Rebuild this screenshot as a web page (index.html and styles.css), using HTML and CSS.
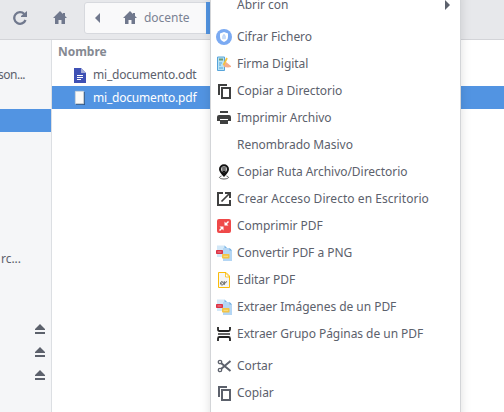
FILE: index.html
```html
<!DOCTYPE html>
<html lang="es">
<head>
<meta charset="utf-8">
<title>docente</title>
<link rel="stylesheet" href="styles.css">
</head>
<body>
<svg width="0" height="0" class="defs">
  <symbol id="home" viewBox="0 0 14 13"><path d="M7 0 0 7h2v6h3.500V9h3v4H12V7h2L12 5V2h-2v1z" fill="currentColor"/></symbol>
  <symbol id="eject" viewBox="0 0 10 10"><path d="M5 0 0 5v1h10V5zM0 8h10v2H0z" fill="currentColor"/></symbol>
  <symbol id="copy" viewBox="0 0 16 16"><path d="M3 12V2h8M6 5h8v10H6z" fill="none" stroke="currentColor" stroke-width="2"/></symbol>
  <symbol id="images" viewBox="0 0 16 16">
    <path d="M1 .5h7.500L11 3v9H1z" fill="#d3e8f8"/><path d="M8.500 .5V3H11z" fill="#7db6e6"/>
    <path d="M7 3h6.500L16 5.500V16H7z" fill="#b4d6f4"/><path d="M13.500 3v2.500H16z" fill="#69a9df"/>
    <rect y="5" width="7" height="4" rx=".7" fill="#dc3345"/><path d="M1.500 7h4" stroke="#f08a94"/>
    <rect x="6" y="9" width="7.500" height="4.500" rx=".7" fill="#f3c445"/><path d="M7.500 11.300h4.500" stroke="#fbe08a"/>
  </symbol>
</svg>
<div class="window">
  <header class="toolbar">
    <svg class="reload" viewBox="0 0 14 14"><path d="M11.300 3A5.800 5.800 0 1 0 12.500 9" fill="none" stroke="currentColor" stroke-width="2.300"/><path d="M14 0v6H8V5z" fill="currentColor"/></svg>
    <svg class="home"><use href="#home"/></svg>
    <nav class="path">
      <svg class="back" viewBox="0 0 5 10"><path d="M5 0v10L0 5z" fill="currentColor"/></svg>
      <svg class="home"><use href="#home"/></svg>
      <span>docente</span>
      <i class="current"></i>
    </nav>
  </header>
  <div class="content">
    <aside class="sidebar">
      <div class="place"></div>
      <div class="place first">son...</div>
      <div class="place"></div>
      <div class="place selected"></div>
      <div class="place"></div><div class="place"></div><div class="place"></div><div class="place"></div><div class="place"></div>
      <div class="place second">rc...</div>
      <div class="place"></div><div class="place"></div>
      <div class="place drive"><svg><use href="#eject"/></svg></div>
      <div class="place drive"><svg><use href="#eject"/></svg></div>
      <div class="place drive"><svg><use href="#eject"/></svg></div>
    </aside>
    <main class="files">
      <div class="heading">Nombre</div>
      <div class="file"><svg viewBox="0 0 16 16"><path d="M2 1h7l5 5v10H2z" fill="#3f51b5"/><path d="M9 1v5h5z" fill="#a4add9"/><path d="M5 8.500h6M5 10.500h6M5 12.500h4" stroke="#fff"/></svg>mi_documento.odt</div>
      <div class="file selected"><svg viewBox="0 0 16 16"><path d="M4 2h9v13H4z" fill="#234b7b" opacity=".8"/><path d="M3.300 1.300h8.400v12.400H3.300z" fill="#fafaf8" stroke="#d4d4ce" stroke-width=".6"/></svg>mi_documento.pdf</div>
    </main>
  </div>
</div>
<div class="menu">
  <div class="item"><svg></svg><span>Abrir con</span><svg class="submenu" viewBox="0 0 5 10"><path d="M0 0v10l5-5z" fill="currentColor"/></svg></div>
  <div class="separator"></div>
  <div class="item"><svg viewBox="0 0 16 16"><circle cx="8" cy="8" r="8" fill="#7baaf2"/><path d="M8 3 12 4.500v3.300Q12 11.500 8 13 4 11.500 4 7.800V4.500z" fill="#fff"/><path d="M6.500 7.300h3v2.500h-3zM7 7V6q1-1.500 2 0v1" fill="#c9dcf8" stroke="#b5cff5" stroke-width=".5"/></svg><span>Cifrar Fichero</span></div>
  <div class="item"><svg viewBox="0 0 16 16"><path d="M1.500 1h7v13.500h-7z" fill="#b9e3f5" stroke="#57a4da"/><path d="M3 2.500h4v2H3z" fill="#6d9b79"/><path d="M3 7h3M3 9h2M3 12h4" stroke="#56a5dc"/><path d="m7 8 3-2 5 4v1l-3 .5-4-.5z" fill="#f4ad8c"/><path d="m7.500 9 3.500-7" stroke="#f4c23e" stroke-width="1.700"/></svg><span>Firma Digital</span></div>
  <div class="item dark"><svg><use href="#copy"/></svg><span>Copiar a Directorio</span></div>
  <div class="item dark"><svg viewBox="0 0 16 16"><path d="M4 1h8v2H4zM3 5h10q2 0 2 2v4h-3V9H4v2H1V7q0-2 2-2zM4 10h8v4H4z" fill="currentColor"/></svg><span>Imprimir Archivo</span></div>
  <div class="item"><svg></svg><span>Renombrado Masivo</span></div>
  <div class="item"><svg viewBox="0 0 16 16"><path d="M8 13Q3 8 3 5.300a5 5 0 0 1 10 0Q13 8 8 13z" fill="#111"/><circle cx="8" cy="5.300" r="3" fill="#ccc"/><path d="M6.200 4h3.600M6.200 6h3.600M6.500 7.500h3" stroke="#111"/><path d="M5.500 12C1 13.500 5 15 8 15s7-1.500 2.500-3" fill="none" stroke="#333" stroke-width=".8"/></svg><span>Copiar Ruta Archivo/Directorio</span></div>
  <div class="item dark"><svg viewBox="0 0 16 16"><path d="M7 2H2v12h12V9" fill="none" stroke="currentColor" stroke-width="2"/><path d="m5.500 10.500 7.500-7.500" stroke="currentColor" stroke-width="1.700"/><path d="M9 1h6v6h-2V3H9z" fill="currentColor"/></svg><span class="wide">Crear Acceso Directo en Escritorio</span></div>
  <div class="item"><svg viewBox="0 0 16 16"><rect x="1" y="1" width="14" height="14" rx="2" fill="#ef4949"/><path d="M8.500 3.500v4h4L11 6l2-2-1-1-2 2zM7.500 12.500v-4h-4L5 10l-2 2 1 1 2-2z" fill="#fff"/></svg><span>Comprimir PDF</span></div>
  <div class="item"><svg><use href="#images"/></svg><span>Convertir PDF a PNG</span></div>
  <div class="item"><svg viewBox="0 0 16 16"><path d="M2.500 .5H10l3.500 3.500v11.500h-11z" fill="#f5f5f5" stroke="#fbbc09"/><path d="M9.500 1v4h4z" fill="#fff" stroke="#fbbc09" stroke-width=".8"/><path d="M4.500 11.500c3-.5 2.500-2 1.300-2-2 .5-1.500 4 .5 3.500 1-.3 1.700-2.500 2-3.500l-.3 3.300q1.500-3.500 3-3.200" fill="none" stroke="#666"/></svg><span>Editar PDF</span></div>
  <div class="item"><svg><use href="#images"/></svg><span>Extraer Imágenes de un PDF</span></div>
  <div class="item"><svg viewBox="0 0 16 16"><path d="M2 1v2.500q0 1.500 1.500 1.500h9Q14 5 14 3.500V1M2 15v-2.500Q2 11 3.500 11h9q1.500 0 1.500 1.500V15" fill="none" stroke="#222" stroke-width="1.800"/><path d="M2 8h12" stroke="#333" stroke-width="1.500"/></svg><span>Extraer Grupo Páginas de un PDF</span></div>
  <div class="separator"></div>
  <div class="item"><svg viewBox="0 0 16 16"><g fill="none" stroke="currentColor"><circle cx="4" cy="4" r="1.700" stroke-width="1.300"/><circle cx="4" cy="12" r="1.700" stroke-width="1.300"/><path d="m5 5 9.500 8M5 11l9.500-8" stroke-width="2"/></g></svg><span>Cortar</span></div>
  <div class="item"><svg><use href="#copy"/></svg><span>Copiar</span></div>
</div>
</body>
</html>
```
FILE: styles.css
```css
* { box-sizing: border-box; }
body {
  margin: 0;
  width: 504px;
  height: 412px;
  overflow: hidden;
  font: 12px/23px "Noto Sans", sans-serif;
  letter-spacing: -.04px;
  color: #5c616c;
}
svg { display: block; flex: none; }
.defs { position: absolute; }
.window { height: 412px; display: flex; flex-direction: column; }
.toolbar {
  height: 40px;
  flex: none;
  display: flex;
  align-items: center;
  padding-left: 13px;
  padding-bottom: 4px;
  background: #e7e8eb;
  border-bottom: 1px solid #d3d4d8;
  color: #70788d;
}
.reload { width: 14px; height: 14px; margin-right: 26px; }
.home { width: 14px; height: 13px; }
.path {
  display: flex;
  align-items: center;
  height: 32px;
  width: 200px;
  margin-left: 17px;
  padding-left: 10px;
  background: #f9f9fa;
  border: 1px solid #d7d9de;
  border-radius: 3px;
}
.back { width: 5px; height: 10px; margin-right: 23px; }
.path .home { margin-right: 7px; }
.path span { width: 62px; color: #7b8293; }
.current { height: 32px; width: 12px; background: #5294e2; }
.content { display: flex; flex: 1; min-height: 0; }
.sidebar {
  width: 52px;
  background: #f5f6f8;
  border-right: 1px solid #dcdfe3;
  overflow: hidden;
}
.place { height: 23px; white-space: nowrap; }
.first { margin-left: -2px; letter-spacing: -.5px; }
.second { margin-left: 1px; }
.drive { display: flex; justify-content: flex-end; padding: 8px 6px 0 0; }
.drive svg { width: 10px; height: 10px; }
.selected { background: #5294e2; color: #fff; }
.files { flex: 1; background: #fff; }
.heading { height: 23px; padding-left: 6px; font-weight: 700; color: #858992; }
.file { height: 23px; display: flex; align-items: center; padding-left: 20px; letter-spacing: -.2px; }
.file svg { width: 16px; height: 16px; margin-right: 5px; }
.menu {
  position: absolute;
  left: 210px;
  top: -10px;
  width: 251px;
  height: 432px;
  background: #fff;
  border: 1px solid #d3d5d8;
  box-shadow: 0 2px 10px rgba(0, 0, 0, .13);
}
.item { height: 27px; display: flex; align-items: center; padding: 0 10px 0 5px; }
.item svg { width: 16px; height: 16px; margin-right: 5px; }
.item .submenu { width: 5px; height: 10px; margin: 0 0 0 auto; }
.wide { letter-spacing: .05px; }
.dark svg { color: #3f4040; }
.separator { height: 5px; }
```
